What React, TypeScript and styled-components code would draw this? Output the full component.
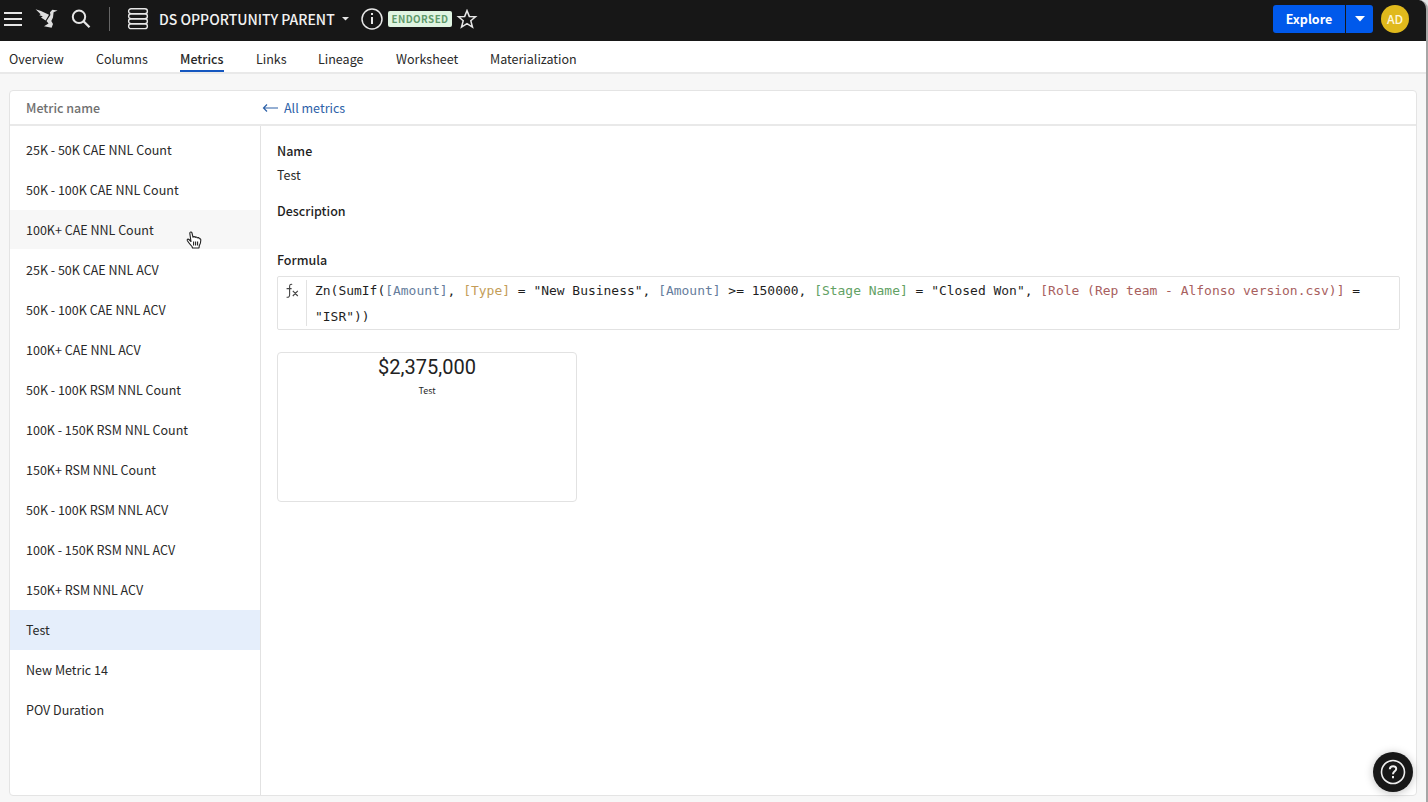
import React from "react";
import styled, { createGlobalStyle } from "styled-components";

const sans = `"Noto Sans CJK SC", "Noto Sans", sans-serif`;

const GlobalStyle = createGlobalStyle`
  * { box-sizing: border-box; }
  html, body { margin: 0; background: #e4e4e4; }
  body { font-family: ${sans}; font-size: 12.53px; color: #292929; overflow: hidden; }
  button { font: inherit; border: 0; padding: 0; }
`;

const Window = styled.div`
  display: flex;
  flex-direction: column;
  width: 1428px;
  height: 802px;
  background: #f7f7f7;
  border-right: 2px solid #a6a6a6;
  border-top-right-radius: 9px;
  overflow: hidden;
`;

const TopBar = styled.header`
  display: flex;
  align-items: center;
  flex: none;
  height: 41px;
  padding: 0 17px 3px 3px;
  background: #171717;
  color: #e6e6e6;
`;

const Icon = styled.svg<{ $gap?: number }>`
  display: block;
  flex: none;
  margin-left: ${(p) => p.$gap ?? 0}px;
`;

const Divider = styled.span`
  width: 1px;
  height: 24px;
  margin: 0 17px 0 18px;
  background: #666;
`;

const Title = styled.h1`
  margin: 0 0 0 10px;
  width: 177px;
  font-size: 14px;
  font-weight: 500;
  line-height: 20px;
  white-space: nowrap;
  color: #f2f2f2;
`;

const Endorsed = styled.span`
  display: flex;
  align-items: center;
  justify-content: center;
  width: 64px;
  height: 16px;
  margin-left: 5px;
  border-radius: 2px;
  background: #e0f5e2;
  color: #5f9a6b;
  font-size: 9.8px;
  font-weight: 700;
  line-height: 16px;
  letter-spacing: 0.45px;
`;

const Spacer = styled.div`
  flex: 1;
`;

const ExploreGroup = styled.div`
  display: flex;
  gap: 1px;
  height: 28px;
  border-radius: 3px;
  overflow: hidden;
`;

const BlueButton = styled.button<{ $width: number }>`
  display: flex;
  align-items: center;
  justify-content: center;
  width: ${(p) => p.$width}px;
  background: #0059eb;
  color: #fff;
  font-size: 12.5px;
  font-weight: 700;
  line-height: 20px;
`;

const Avatar = styled.div`
  display: flex;
  align-items: center;
  justify-content: center;
  width: 28px;
  height: 28px;
  margin-left: 8px;
  border-radius: 50%;
  background: #e0b91c;
  color: #fff6d8;
  font-size: 12.3px;
  font-weight: 500;
  line-height: 20px;
`;

const Tabs = styled.nav`
  display: flex;
  gap: 32px;
  flex: none;
  height: 33px;
  padding-left: 9px;
  background: #fff;
  border-bottom: 2px solid #e9e9e9;
`;

const Tab = styled.a<{ $width: number; $active?: boolean }>`
  width: ${(p) => p.$width}px;
  height: 31px;
  line-height: 35px;
  white-space: nowrap;
  font-weight: ${(p) => (p.$active ? 500 : 400)};
  box-shadow: ${(p) => (p.$active ? "inset 0 -2px #1557c0" : "none")};
`;

const Panel = styled.main`
  display: flex;
  flex-direction: column;
  flex: 1;
  margin: 16px 9px 6px 9px;
  background: #fff;
  border: 1px solid #e4e4e4;
  border-radius: 4px;
`;

const PanelHeader = styled.div`
  display: flex;
  align-items: center;
  flex: none;
  height: 35px;
  border-bottom: 2px solid #e9e9e9;
`;

const ColumnHeading = styled.div`
  width: 252px;
  padding-left: 16px;
  color: #707070;
  font-weight: 500;
  line-height: 19px;
`;

const BackLink = styled.a`
  display: flex;
  align-items: center;
  gap: 6px;
  color: #2d61a8;
  line-height: 19px;
`;

const PanelBody = styled.div`
  display: flex;
  flex: 1;
`;

const MetricList = styled.ul`
  width: 251px;
  margin: 0;
  padding: 4px 0 0;
  list-style: none;
  border-right: 1px solid #e2e2e2;
`;

const rowColors = { hover: "#f7f7f7", selected: "#e5eefb" };

const MetricRow = styled.li<{ $state?: "hover" | "selected" }>`
  height: 39px;
  margin-bottom: 1px;
  padding-left: 16px;
  line-height: 39px;
  white-space: nowrap;
  background: ${(p) => (p.$state ? rowColors[p.$state] : "transparent")};
  box-shadow: ${(p) => (p.$state === "selected" ? `0 1px ${rowColors.selected}` : "none")};
`;

const Detail = styled.section`
  flex: 1;
  padding: 15px 16px 0;
`;

const Label = styled.h2<{ $top?: number }>`
  margin: ${(p) => p.$top ?? 0}px 0 0;
  font-size: 12.5px;
  font-weight: 500;
  line-height: 19px;
  color: #1f1f1f;
`;

const Value = styled.p`
  margin: 5px 0 0;
  line-height: 19px;
`;

const FormulaBox = styled.div`
  display: flex;
  width: 1123px;
  height: 54px;
  margin-top: 7px;
  border: 1px solid #e2e2e2;
  border-radius: 2px;
`;

const FormulaIcon = styled.div`
  width: 29px;
  height: 46px;
  margin-top: 3px;
  padding: 3px 0 0 7px;
  border-right: 1px solid #e2e2e2;
`;

const Formula = styled.code`
  display: flex;
  flex-direction: column;
  gap: 9px;
  padding: 5px 0 0 8px;
  font-family: "DejaVu Sans Mono", monospace;
  font-size: 12.96px;
  line-height: 17px;
  white-space: pre;
  color: #1f1f1f;
`;

const CodeLine = styled.span`
  display: flex;
  height: 17px;
`;

const Token = styled.span<{ $color?: string }>`
  color: ${(p) => p.$color ?? "inherit"};
`;

const ValueCard = styled.div`
  width: 300px;
  height: 150px;
  margin-top: 22px;
  padding-top: 2px;
  border: 1px solid #e2e2e2;
  border-radius: 4px;
  text-align: center;
`;

const BigNumber = styled.div`
  font-family: Roboto, sans-serif;
  font-size: 20px;
  line-height: 24px;
  color: #222;
`;

const Caption = styled.div`
  font-size: 9px;
  line-height: 16px;
  margin-top: 4px;
`;

const HelpButton = styled.button`
  position: absolute;
  left: 1373px;
  top: 752px;
  display: flex;
  align-items: center;
  justify-content: center;
  width: 40px;
  height: 40px;
  border-radius: 50%;
  background: #171717;
  box-shadow: 0 1px 8px rgba(0, 0, 0, 0.25);
`;

const Cursor = styled.svg`
  position: absolute;
  left: 186px;
  top: 231px;
`;

const tabs: [string, number][] = [
  ["Overview", 55],
  ["Columns", 52],
  ["Metrics", 44],
  ["Links", 30],
  ["Lineage", 46],
  ["Worksheet", 62],
  ["Materialization", 87],
];

const metrics = [
  "25K - 50K CAE NNL Count",
  "50K - 100K CAE NNL Count",
  "100K+ CAE NNL Count",
  "25K - 50K CAE NNL ACV",
  "50K - 100K CAE NNL ACV",
  "100K+ CAE NNL ACV",
  "50K - 100K RSM NNL Count",
  "100K - 150K RSM NNL Count",
  "150K+ RSM NNL Count",
  "50K - 100K RSM NNL ACV",
  "100K - 150K RSM NNL ACV",
  "150K+ RSM NNL ACV",
  "Test",
  "New Metric 14",
  "POV Duration",
];

const formulaLines: [string, string?][][] = [
  [
    ["Zn(SumIf("],
    ["[Amount]", "#667d9c"],
    [", "],
    ["[Type]", "#c49d58"],
    [' = "New Business", '],
    ["[Amount]", "#667d9c"],
    [" >= 150000, "],
    ["[Stage Name]", "#62a164"],
    [' = "Closed Won", '],
    ["[Role (Rep team - Alfonso version.csv)]", "#a8605e"],
    [" ="],
  ],
  [['"ISR"))']],
];

export default function App() {
  return (
    <>
      <GlobalStyle />
      <Window>
        <TopBar>
          <Icon width="20" height="16" viewBox="0 0 20 16" stroke="#e6e6e6" strokeWidth="1.8">
            <path d="M1 2h18M1 8h18M1 14h18" />
          </Icon>
          <Icon $gap={12} width="24" height="22" viewBox="0 0 24 22" fill="#dedede">
            <path d="M0.6 1.2 6 3 14 6.8 10.6 12.6 6 9.5 7.8 8.3 4.2 7.2 5.6 6.2Z" />
            <path d="M15 4.2 17.3 1.8 22.6 2.6 18.6 4.2 18 9.5 16.3 13 18 16 16.6 19.8 9 18.3 13.5 15.4 11.5 13 15.4 7Z" />
          </Icon>
          <Icon $gap={12} width="20" height="20" viewBox="0 0 20 20" fill="none" stroke="#e6e6e6" strokeWidth="2">
            <circle cx="8" cy="7.8" r="6.2" />
            <path d="m12.5 12.3 6 6" strokeWidth="2.3" />
          </Icon>
          <Divider />
          <Icon width="22" height="22" viewBox="0 0 22 22" fill="none" stroke="#e6e6e6" strokeWidth="1.4">
            <rect x="1.6" y="0.8" width="18.8" height="5" rx="2.5" />
            <rect x="1.6" y="5.8" width="18.8" height="5" rx="2.5" />
            <rect x="1.6" y="10.8" width="18.8" height="5" rx="2.5" />
            <rect x="1.6" y="15.8" width="18.8" height="4.8" rx="2.4" />
          </Icon>
          <Title>DS OPPORTUNITY PARENT</Title>
          <Icon $gap={6} width="7" height="4" viewBox="0 0 7 4" fill="#e6e6e6">
            <path d="M0 0h7L3.5 3.5z" />
          </Icon>
          <Icon $gap={12} width="22" height="22" viewBox="0 0 22 22" fill="none" stroke="#e6e6e6" strokeWidth="1.5">
            <circle cx="11" cy="11" r="10" />
            <path d="M11 9v7M11 5v2" strokeWidth="2" />
          </Icon>
          <Endorsed>ENDORSED</Endorsed>
          <Icon $gap={4} width="22" height="20" viewBox="0 0 22 20" fill="none" stroke="#e6e6e6" strokeWidth="1.5">
            <path d="m11 1.6 2.3 5.8 6.3.3-4.8 4.1 1.7 6.4L11 14.7l-5.5 3.5 1.7-6.4-4.8-4.1 6.3-.3z" />
          </Icon>
          <Spacer />
          <ExploreGroup>
            <BlueButton $width={72}>Explore</BlueButton>
            <BlueButton $width={27}>
              <Icon width="10" height="6" viewBox="0 0 10 6" fill="#fff">
                <path d="M0 0h10L5 5.5z" />
              </Icon>
            </BlueButton>
          </ExploreGroup>
          <Avatar>AD</Avatar>
        </TopBar>
        <Tabs>
          {tabs.map(([name, width]) => (
            <Tab key={name} $width={width} $active={name === "Metrics"}>
              {name}
            </Tab>
          ))}
        </Tabs>
        <Panel>
          <PanelHeader>
            <ColumnHeading>Metric name</ColumnHeading>
            <BackLink>
              <Icon width="16" height="10" viewBox="0 0 16 10" fill="none" stroke="#2d61a8" strokeWidth="1.2">
                <path d="M16 5H1.5M5 1.5 1.5 5 5 8.5" />
              </Icon>
              All metrics
            </BackLink>
          </PanelHeader>
          <PanelBody>
            <MetricList>
              {metrics.map((name, i) => (
                <MetricRow key={name} $state={i === 2 ? "hover" : i === 12 ? "selected" : undefined}>
                  {name}
                </MetricRow>
              ))}
            </MetricList>
            <Detail>
              <Label>Name</Label>
              <Value>Test</Value>
              <Label $top={17}>Description</Label>
              <Label $top={30}>Formula</Label>
              <FormulaBox>
                <FormulaIcon>
                  <Icon width="14" height="16" viewBox="0 0 14 16" fill="none" stroke="#444" strokeWidth="1.1">
                    <path d="M7.2 1.5C5.3.8 4.6 2 4.6 3.6v8.2c0 1.8-1 2.9-3 2.4M1.6 5.6h5M7.8 7.8l5 5.2M12.8 7.8l-5 5.2" />
                  </Icon>
                </FormulaIcon>
                <Formula>
                  {formulaLines.map((line, i) => (
                    <CodeLine key={i}>
                      {line.map(([text, color], j) => (
                        <Token key={j} $color={color}>
                          {text}
                        </Token>
                      ))}
                    </CodeLine>
                  ))}
                </Formula>
              </FormulaBox>
              <ValueCard>
                <BigNumber>$2,375,000</BigNumber>
                <Caption>Test</Caption>
              </ValueCard>
            </Detail>
          </PanelBody>
        </Panel>
      </Window>
      <Cursor width="16" height="18" viewBox="0 0 16 18" fill="#fff" stroke="#222" strokeWidth="1.1" strokeLinejoin="round">
        <path d="M5 10.5 3.8 2.4c-.2-1.6 1.8-2 2.2-.4L7 6.3c.2-1 1.8-1.1 2.1.2.4-.9 1.9-.8 2.1.5.6-.8 2-.5 2.1.8.6-.3 1.5 0 1.5 1.2 0 3.2-.7 4-1.5 5.5L13 17H6.5L6 15.5C4.5 13.8 2.6 11.6 1.4 9.7.7 8.5 2 7.6 3 8.5z" />
        <path d="M7.6 10.5v4M9.6 10.5v4M11.6 10.5v4" fill="none" />
      </Cursor>
      <HelpButton>
        <Icon width="28" height="28" viewBox="0 0 28 28" fill="none" stroke="#eee" strokeWidth="1.6">
          <circle cx="14" cy="14" r="11.5" />
          <path d="M10.8 11.3c.2-4.2 6.6-4 6.4-.3-.1 2.4-3.2 2.3-3.2 5.2M14 18v2.2" strokeWidth="2" />
        </Icon>
      </HelpButton>
    </>
  );
}
